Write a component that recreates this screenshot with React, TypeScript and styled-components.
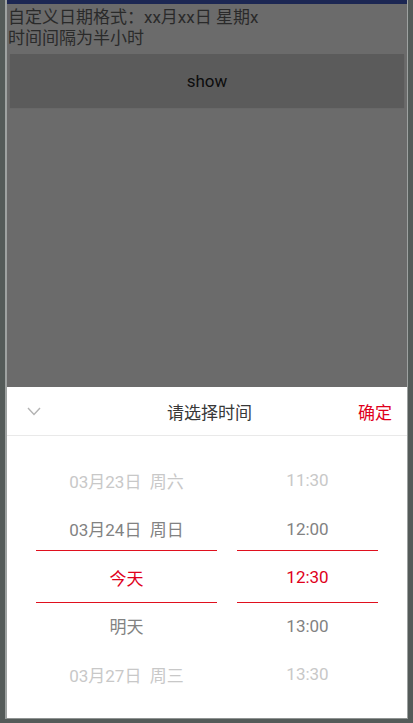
import React from "react";
import styled, { createGlobalStyle } from "styled-components";

const Global = createGlobalStyle`
  html, body { margin: 0; padding: 0; }
  body { width: 413px; height: 723px; overflow: hidden; background: #545b59; }
  * { box-sizing: border-box; }
`;

const FONT = `Roboto, "Noto Sans CJK SC", "Noto Sans", sans-serif`;

const Frame = styled.div`
  width: 413px;
  height: 723px;
  padding: 0 5px 4px 5px;
  background: #545b59;
`;

const Screen = styled.div`
  height: 719px;
  display: flex;
  flex-direction: column;
  background: #6b6b6b;
  border-left: 2px solid #9ea2a1;
  border-right: 1px solid #9ea2a1;
  border-bottom: 1px solid #8f9392;
  font-family: ${FONT};
`;

const StatusBar = styled.div`
  height: 4px;
  background: #1c2753;
  flex-shrink: 0;
`;

const Info = styled.div`
  padding: 3px 0 0 1px;
  font-size: 17px;
  line-height: 20.5px;
  color: #2a2a2a;
`;

const ShowButton = styled.div`
  margin: 6px 3px 0 3px;
  height: 53px;
  display: flex;
  align-items: center;
  justify-content: center;
  background: #5b5b5b;
  color: #0d0d0d;
  font-size: 17px;
  box-shadow: 0 1px 1px rgba(0,0,0,0.15);
`;

const Sheet = styled.div`
  margin-top: auto;
  height: 331px;
  background: #fff;
  display: flex;
  flex-direction: column;
`;

const Header = styled.div`
  height: 49px;
  flex-shrink: 0;
  border-bottom: 1px solid #e9e9e9;
  display: grid;
  grid-template-columns: 80px 1fr 80px;
  align-items: center;
  padding: 0 15px 0 20px;
`;

const Chevron = styled.svg`
  width: 14px;
  height: 9px;
  display: block;
`;

const Title = styled.div`
  text-align: center;
  font-size: 17px;
  color: #383838;
`;

const Confirm = styled.div`
  text-align: right;
  font-size: 17px;
  color: #e0001b;
`;

const Wheel = styled.div`
  display: grid;
  grid-template-columns: 181px 141px;
  column-gap: 20px;
  padding: 20px 29px 0 29px;
`;

const Column = styled.div`
  position: relative;
  display: flex;
  flex-direction: column;
`;

const Indicator = styled.div`
  position: absolute;
  left: 0;
  right: 0;
  top: 94px;
  height: 53px;
  border-top: 1px solid #e0101e;
  border-bottom: 1px solid #e0101e;
  pointer-events: none;
`;

type Level = "far" | "near" | "selected";

const colors: Record<Level, string> = {
  far: "#c8c8c8",
  near: "#828282",
  selected: "#e0001b",
};

const Item = styled.div<{ $level: Level }>`
  height: 48.5px;
  display: flex;
  align-items: center;
  justify-content: center;
  font-size: 17px;
  white-space: pre;
  color: ${(p) => colors[p.$level]};
`;

const levels: Level[] = ["far", "near", "selected", "near", "far"];
const dates = ["03月23日  周六", "03月24日  周日", "今天", "明天", "03月27日  周三"];
const times = ["11:30", "12:00", "12:30", "13:00", "13:30"];

export default function App() {
  return (
    <>
      <Global />
      <Frame>
        <Screen>
          <StatusBar />
          <Info>
            <div>自定义日期格式：xx月xx日 星期x</div>
            <div>时间间隔为半小时</div>
          </Info>
          <ShowButton>show</ShowButton>
          <Sheet>
            <Header>
              <Chevron viewBox="0 0 14 9">
                <polyline points="1,1 7,7.5 13,1" fill="none" stroke="#b3b3b3" strokeWidth="1.4" />
              </Chevron>
              <Title>请选择时间</Title>
              <Confirm>确定</Confirm>
            </Header>
            <Wheel>
              <Column>
                {dates.map((d, i) => (
                  <Item key={d} $level={levels[i]}>{d}</Item>
                ))}
                <Indicator />
              </Column>
              <Column>
                {times.map((t, i) => (
                  <Item key={t} $level={levels[i]}>{t}</Item>
                ))}
                <Indicator />
              </Column>
            </Wheel>
          </Sheet>
        </Screen>
      </Frame>
    </>
  );
}
